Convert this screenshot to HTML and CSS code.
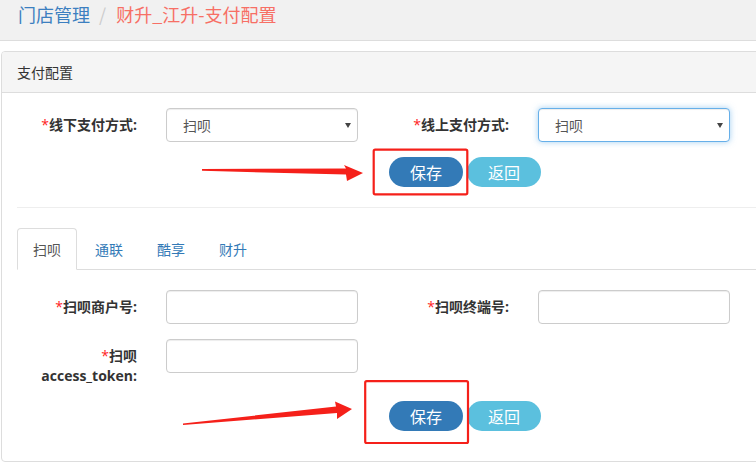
FILE: index.html
```html
<!DOCTYPE html>
<html lang="zh">
<head>
<meta charset="utf-8">
<link rel="stylesheet" href="styles.css">
</head>
<body>
<div class="topbar">
  <span class="crumb-link">门店管理</span>
  <span class="crumb-sep">/</span>
  <span class="crumb-active">财升_江升-支付配置</span>
</div>

<div class="panel">
  <div class="panel-heading">支付配置</div>
  <div class="panel-body">
    <div class="form-row">
      <div class="group">
        <label class="lbl"><span class="req">*</span>线下支付方式:</label>
        <div class="field select">扫呗<span class="caret"></span></div>
      </div>
      <div class="group">
        <label class="lbl"><span class="req">*</span>线上支付方式:</label>
        <div class="field select focus">扫呗<span class="caret"></span></div>
      </div>
    </div>
    <div class="btn-row">
      <button class="btn btn-primary">保存</button>
      <button class="btn btn-info">返回</button>
    </div>

    <div class="divider"></div>

    <ul class="tabs">
      <li class="tab active">扫呗</li>
      <li class="tab">通联</li>
      <li class="tab">酷享</li>
      <li class="tab">财升</li>
    </ul>

    <div class="tab-content">
      <div class="form-row">
        <div class="group">
          <label class="lbl"><span class="req">*</span>扫呗商户号:</label>
          <div class="field input"></div>
        </div>
        <div class="group">
          <label class="lbl"><span class="req">*</span>扫呗终端号:</label>
          <div class="field input"></div>
        </div>
      </div>
      <div class="form-row">
        <div class="group">
          <label class="lbl"><span class="req">*</span>扫呗<br>access_token:</label>
          <div class="field input"></div>
        </div>
      </div>
      <div class="btn-row last">
        <button class="btn btn-primary">保存</button>
        <button class="btn btn-info">返回</button>
      </div>
    </div>
  </div>
</div>

<svg class="annot" width="756" height="462" viewBox="0 0 756 462" xmlns="http://www.w3.org/2000/svg">
  <rect x="373.7" y="149.7" width="93.6" height="44.6" rx="1.5" fill="none" stroke="#f5201a" stroke-width="2.2"/>
  <polygon points="202,169 346,168.5 344,165 363,173 347,181 346,174.5 202,170.8" fill="#f5201a"/>
  <rect x="365.2" y="381.2" width="102.8" height="61.8" rx="1.5" fill="none" stroke="#f5201a" stroke-width="2.2"/>
  <polygon points="183,423.5 336,406.5 335,401.5 352,409 337,419 337,413 183,425" fill="#f5201a"/>
</svg>
</body>
</html>
```

FILE: styles.css
```css
html, body {
  margin: 0;
  padding: 0;
}
body {
  width: 756px;
  height: 462px;
  overflow: hidden;
  position: relative;
  background: #fff;
  font-family: "Open Sans", "Noto Sans CJK SC", sans-serif;
  font-size: 14px;
  color: #333;
}

.topbar {
  height: 37px;
  padding: 3px 0 0 18px;
  background: #f1f1f1;
  border-bottom: 1px solid #ddd;
  font-size: 18px;
  line-height: 22px;
  font-family: "Noto Sans CJK SC", sans-serif;
}
.crumb-link { color: #3c7fc0; }
.crumb-sep { color: #ccc; margin: 0 6px 0 5px; }
.crumb-active { color: #f76f65; }

.panel {
  margin: 10px 0 0 1px;
  width: 790px;
  border: 1px solid #ddd;
  border-radius: 4px;
  box-sizing: border-box;
}
.panel-heading {
  height: 20px;
  padding: 10px 15px;
  line-height: 20px;
  background: #f5f5f5;
  border-bottom: 1px solid #ddd;
  border-radius: 3px 3px 0 0;
  font-family: "Noto Sans CJK SC", sans-serif;
  color: #333;
}
.panel-body {
  padding: 15px;
}

.form-row {
  display: flex;
  margin-bottom: 15px;
}
.group {
  display: flex;
  width: 341px;
}
.group + .group {
  margin-left: 31px;
}
.lbl {
  width: 120px;
  margin-right: 29px;
  text-align: right;
  padding-top: 7px;
  line-height: 20px;
  font-weight: bold;
  color: #333;
}
.req { color: #f22; font-weight: normal; }

.field {
  width: 192px;
  height: 34px;
  box-sizing: border-box;
  border: 1px solid #ccc;
  border-radius: 4px;
  box-shadow: inset 0 1px 1px rgba(0,0,0,.075);
  background: #fff;
}
.select {
  position: relative;
  padding-left: 16px;
  line-height: 32px;
  color: #555;
  font-family: "Noto Sans CJK SC", sans-serif;
}
.caret {
  position: absolute;
  right: 6px;
  top: 14px;
  width: 0;
  height: 0;
  border-left: 3px solid transparent;
  border-right: 3px solid transparent;
  border-top: 5px solid #444;
}
.focus {
  border-color: #66afe9;
  box-shadow: inset 0 1px 1px rgba(0,0,0,.075), 0 0 6px rgba(102,175,233,.6);
}

.btn-row {
  display: flex;
  gap: 4px;
  padding-left: 372px;
}
.btn-row.last { margin-bottom: 15px; }
.btn {
  width: 74px;
  height: 30px;
  border: none;
  border-radius: 15px;
  color: #fff;
  font-size: 16px;
  line-height: 30px;
  padding: 0;
  font-family: "Noto Sans CJK SC", sans-serif;
}
.btn-primary { background: #337ab7; }
.btn-info { background: #5bc0de; }

.divider {
  margin: 20px 0;
  border-top: 1px solid #eee;
}

.tabs {
  display: flex;
  list-style: none;
  margin: 0;
  padding: 0;
  border-bottom: 1px solid #ddd;
  font-family: "Noto Sans CJK SC", sans-serif;
}
.tab {
  padding: 10px 15px;
  line-height: 20px;
  margin-right: 2px;
  margin-bottom: -1px;
  border: 1px solid transparent;
  border-radius: 4px 4px 0 0;
  color: #337ab7;
}
.tab.active {
  color: #555;
  background: #fff;
  border-color: #ddd;
  border-bottom-color: transparent;
}
.tab-content {
  padding-top: 20px;
}

.annot {
  position: absolute;
  left: 0;
  top: 0;
  pointer-events: none;
}
```
